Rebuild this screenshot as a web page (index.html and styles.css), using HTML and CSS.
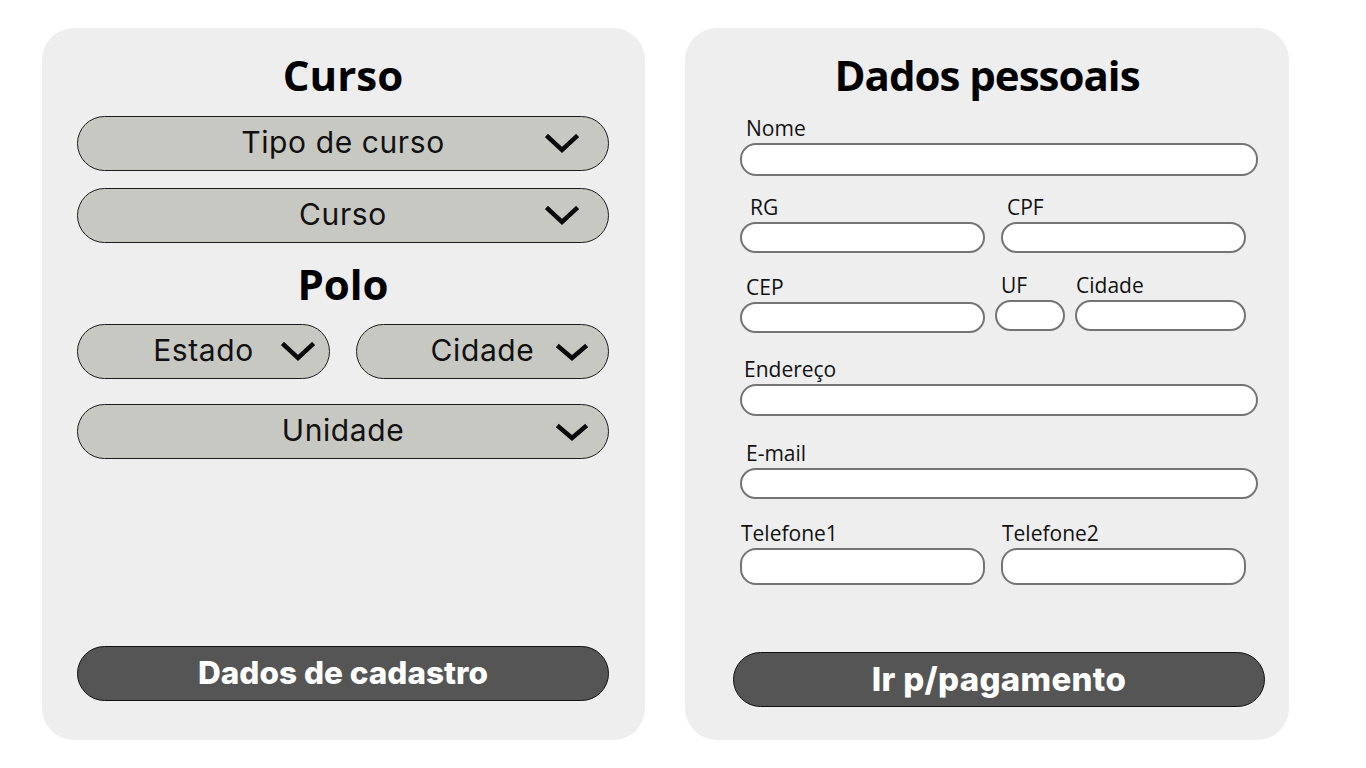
FILE: index.html
```html
<!DOCTYPE html>
<html lang="pt-BR">
<head>
<meta charset="utf-8">
<title>Matrícula</title>
<link rel="stylesheet" href="styles.css">
</head>
<body>
<main class="page">
  <section class="panel panel-left">
    <h2 class="title">Curso</h2>
    <div class="select select-first">
      <span>Tipo de curso</span>
      <svg class="chev chev-lg" viewBox="0 0 34 20"><path d="M3 3 L17 16 L31 3"/></svg>
    </div>
    <div class="select select-next">
      <span>Curso</span>
      <svg class="chev chev-lg" viewBox="0 0 34 20"><path d="M3 3 L17 16 L31 3"/></svg>
    </div>
    <h2 class="title title-polo">Polo</h2>
    <div class="select-row">
      <div class="select select-half">
        <span>Estado</span>
        <svg class="chev chev-estado" viewBox="0 0 34 20"><path d="M3 3 L17 16 L31 3"/></svg>
      </div>
      <div class="select select-half">
        <span>Cidade</span>
        <svg class="chev chev-sm" viewBox="0 0 34 20"><path d="M4 4 L17 15 L30 4"/></svg>
      </div>
    </div>
    <div class="select select-unidade">
      <span>Unidade</span>
      <svg class="chev chev-sm" viewBox="0 0 34 20"><path d="M4 4 L17 15 L30 4"/></svg>
    </div>
    <button class="btn btn-left" type="button">Dados de cadastro</button>
  </section>

  <section class="panel panel-right">
    <h2 class="title title-right">Dados pessoais</h2>
    <div class="field f-nome">
      <label class="lbl">Nome</label>
      <div class="input input-nome"></div>
    </div>
    <div class="row row-2 r-rg">
      <div class="field"><label class="lbl lbl-rg">RG</label><div class="input"></div></div>
      <div class="field"><label class="lbl">CPF</label><div class="input"></div></div>
    </div>
    <div class="row row-3 r-cep">
      <div class="field w-cep"><label class="lbl">CEP</label><div class="input"></div></div>
      <div class="field w-uf"><label class="lbl lbl-up">UF</label><div class="input"></div></div>
      <div class="field w-cid"><label class="lbl lbl-tight lbl-up">Cidade</label><div class="input"></div></div>
    </div>
    <div class="field r-end">
      <label class="lbl lbl-end">Endereço</label>
      <div class="input"></div>
    </div>
    <div class="field r-mail">
      <label class="lbl">E-mail</label>
      <div class="input input-thin"></div>
    </div>
    <div class="row row-2 r-tel">
      <div class="field"><label class="lbl lbl-tight">Telefone1</label><div class="input input-tall"></div></div>
      <div class="field"><label class="lbl lbl-tight">Telefone2</label><div class="input input-tall"></div></div>
    </div>
    <button class="btn btn-right" type="button">Ir p/pagamento</button>
  </section>
</main>
</body>
</html>
```

FILE: styles.css
```css
html, body {
  margin: 0;
  padding: 0;
  background: #ffffff;
}

.page {
  display: flex;
  gap: 40px;
  padding: 28px 0 0 42px;
}

.panel {
  width: 603px;
  height: 712px;
  box-sizing: border-box;
  background: #eeeeee;
  border-radius: 32px;
  display: flex;
  flex-direction: column;
}

.panel-left {
  padding: 23px 36px 39px 35px;
}

.panel-right {
  width: 604px;
  padding: 23px 31px 33px 55px;
}

.title {
  margin: 0;
  font-family: "Open Sans", "Noto Sans", sans-serif;
  font-weight: 700;
  font-size: 42px;
  line-height: 48px;
  text-align: center;
  color: #000;
}

.title-polo {
  margin-top: 17px;
}

.title-right {
  margin-left: -24px;
  letter-spacing: -1px;
}

/* dropdowns */
.select {
  position: relative;
  height: 55px;
  box-sizing: border-box;
  border: 1px solid #1c1c1c;
  border-radius: 28px;
  background: #c8c8c3;
  display: flex;
  align-items: center;
  justify-content: center;
  padding-bottom: 3px;
  font-family: "Inter", "Roboto", sans-serif;
  font-size: 30px;
  letter-spacing: 0.6px;
  color: #111;
}

.select-first { margin-top: 17px; }
.select-next { margin-top: 17px; }

.select-row {
  display: flex;
  gap: 26px;
  margin-top: 16px;
}

.select-half {
  flex: 1;
}

.select-unidade {
  margin-top: 25px;
}

.chev {
  position: absolute;
  top: 50%;
  fill: none;
  stroke: #0a0a0a;
  stroke-width: 4.5;
  stroke-linecap: square;
  stroke-linejoin: miter;
}

.chev-lg {
  right: 29px;
  width: 34px;
  height: 20px;
  margin-top: -10px;
}

.chev-estado {
  right: 14px;
  width: 34px;
  height: 20px;
  margin-top: -10px;
}

.chev-sm {
  right: 19px;
  width: 34px;
  height: 20px;
  margin-top: -9px;
}

/* buttons */
.btn {
  margin-top: auto;
  height: 55px;
  box-sizing: border-box;
  border: 1px solid #111;
  border-radius: 28px;
  background: #555555;
  color: #ffffff;
  font-family: "Inter", "Roboto", sans-serif;
  font-weight: 800;
  font-size: 32px;
  letter-spacing: 0;
  padding: 0 0 2px;
  cursor: pointer;
}

.btn-left {
  font-size: 31.5px;
}

.btn-right {
  margin-left: -7px;
  margin-right: -7px;
  font-size: 33px;
  letter-spacing: 0.3px;
}

/* form fields */
.field {
  display: flex;
  flex-direction: column;
}

.lbl {
  font-family: "Open Sans", "Noto Sans", sans-serif;
  font-size: 21px;
  line-height: 24px;
  color: #111;
  padding-left: 6px;
  margin-bottom: 3px;
}

.lbl-rg { padding-left: 10px; }
.lbl-tight { padding-left: 1px; }
.lbl-end { padding-left: 4px; }
.lbl-up { margin-top: -3px; }

.input {
  height: 32px;
  box-sizing: border-box;
  border: 2px solid #747474;
  border-radius: 16px;
  background: #ffffff;
}

.input-nome { height: 33px; }
.input-thin { height: 31px; }

.f-nome { margin-top: 17px; }

.row {
  display: flex;
  align-items: flex-end;
}

.row-2 {
  gap: 16px;
  width: 506px;
}

.row-2 .field {
  flex: 1;
}

.row-2 .input {
  height: 31px;
}

.row-2 .input.input-tall {
  height: 37px;
}

.r-rg { margin-top: 19px; }

.row-3 {
  gap: 10px;
  margin-top: 22px;
}

.w-cep { width: 245px; }
.w-uf { width: 70px; }
.w-cid { width: 171px; }

.row-3 .input { height: 31px; }
.row-3 .w-uf .input,
.row-3 .w-cid .input { margin-bottom: 2px; }

.r-end { margin-top: 24px; }
.r-mail { margin-top: 25px; }
.r-tel { margin-top: 22px; }
```
